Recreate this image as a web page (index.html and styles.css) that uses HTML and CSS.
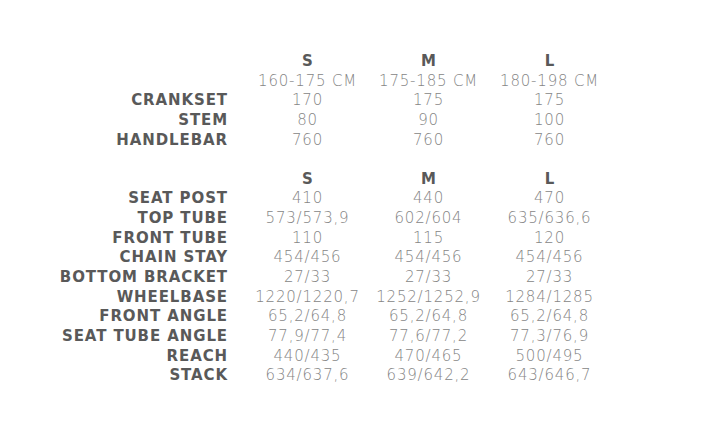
FILE: index.html
```html
<!DOCTYPE html>
<html>
<head>
<meta charset="utf-8">
<link rel="stylesheet" href="styles.css">
</head>
<body>
<div class="specs">
  <div class="lbl"></div><div class="size">S</div><div class="size">M</div><div class="size">L</div>
  <div class="lbl"></div><div class="val">160-175 CM</div><div class="val">175-185 CM</div><div class="val">180-198 CM</div>
  <div class="lbl">CRANKSET</div><div class="val">170</div><div class="val">175</div><div class="val">175</div>
  <div class="lbl">STEM</div><div class="val">80</div><div class="val">90</div><div class="val">100</div>
  <div class="lbl">HANDLEBAR</div><div class="val">760</div><div class="val">760</div><div class="val">760</div>
  <div class="spacer"></div>
  <div class="lbl"></div><div class="size">S</div><div class="size">M</div><div class="size">L</div>
  <div class="lbl">SEAT POST</div><div class="val">410</div><div class="val">440</div><div class="val">470</div>
  <div class="lbl">TOP TUBE</div><div class="val">573/573,9</div><div class="val">602/604</div><div class="val">635/636,6</div>
  <div class="lbl">FRONT TUBE</div><div class="val">110</div><div class="val">115</div><div class="val">120</div>
  <div class="lbl">CHAIN STAY</div><div class="val">454/456</div><div class="val">454/456</div><div class="val">454/456</div>
  <div class="lbl">BOTTOM BRACKET</div><div class="val">27/33</div><div class="val">27/33</div><div class="val">27/33</div>
  <div class="lbl">WHEELBASE</div><div class="val">1220/1220,7</div><div class="val">1252/1252,9</div><div class="val">1284/1285</div>
  <div class="lbl">FRONT ANGLE</div><div class="val">65,2/64,8</div><div class="val">65,2/64,8</div><div class="val">65,2/64,8</div>
  <div class="lbl">SEAT TUBE ANGLE</div><div class="val">77,9/77,4</div><div class="val">77,6/77,2</div><div class="val">77,3/76,9</div>
  <div class="lbl">REACH</div><div class="val">440/435</div><div class="val">470/465</div><div class="val">500/495</div>
  <div class="lbl">STACK</div><div class="val">634/637,6</div><div class="val">639/642,2</div><div class="val">643/646,7</div>
</div>
</body>
</html>
```

FILE: styles.css
```css
html, body {
  margin: 0;
  padding: 0;
  background: #ffffff;
}
body {
  width: 712px;
  height: 435px;
  overflow: hidden;
}
.specs {
  display: grid;
  grid-template-columns: 247px repeat(3, 121px);
  grid-auto-rows: 19.65px;
  padding-top: 52px;
  font-family: "DejaVu Sans", sans-serif;
  font-size: 15px;
  line-height: 19.65px;
}
.lbl {
  text-align: right;
  padding-right: 19px;
  font-weight: 700;
  color: #595959;
  letter-spacing: 0.9px;
  white-space: nowrap;
}
.size {
  text-align: center;
  font-weight: 700;
  color: #595959;
}
.val {
  text-align: center;
  font-weight: 200;
  color: #858585;
  letter-spacing: 0.8px;
  white-space: nowrap;
}
.spacer {
  grid-column: 1 / -1;
}
```
